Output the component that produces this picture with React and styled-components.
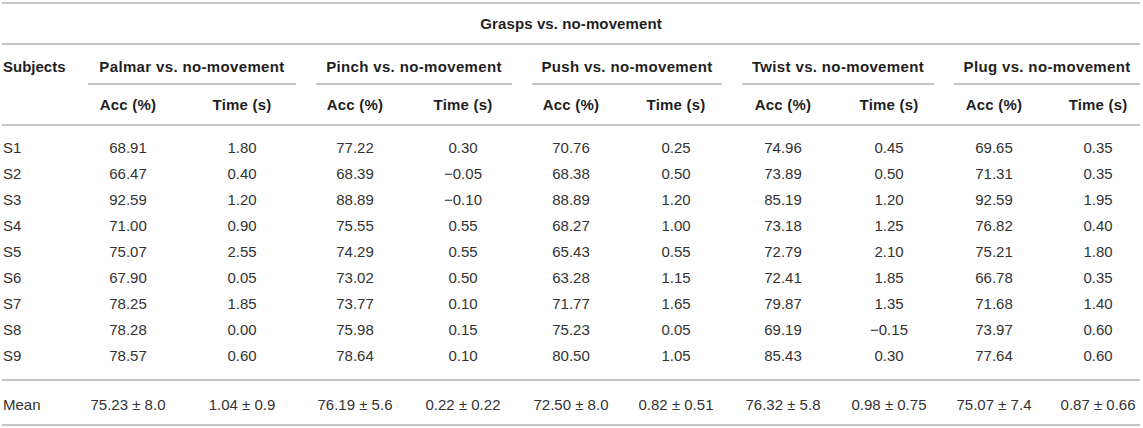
import React from 'react';
import styled, { createGlobalStyle } from 'styled-components';

const GlobalStyle = createGlobalStyle`
  body {
    margin: 0;
    background: #ffffff;
    font-family: 'Liberation Sans', Arial, sans-serif;
  }
`;

const LINE = '2px solid #c4c4c4';

// column widths tuned so the centred values line up with the source table
const cols = [
  { w: 76 },
  { w: 100 },
  { w: 128 },
  { w: 98 },
  { w: 118 },
  { w: 98 },
  { w: 112 },
  { w: 102 },
  { w: 110 },
  { w: 112, pr: 12 },
  { w: 84 },
];

const groups = ['Palmar', 'Pinch', 'Push', 'Twist', 'Plug'];

const rows = [
  ['S1', '68.91', '1.80', '77.22', '0.30', '70.76', '0.25', '74.96', '0.45', '69.65', '0.35'],
  ['S2', '66.47', '0.40', '68.39', '\u22120.05', '68.38', '0.50', '73.89', '0.50', '71.31', '0.35'],
  ['S3', '92.59', '1.20', '88.89', '\u22120.10', '88.89', '1.20', '85.19', '1.20', '92.59', '1.95'],
  ['S4', '71.00', '0.90', '75.55', '0.55', '68.27', '1.00', '73.18', '1.25', '76.82', '0.40'],
  ['S5', '75.07', '2.55', '74.29', '0.55', '65.43', '0.55', '72.79', '2.10', '75.21', '1.80'],
  ['S6', '67.90', '0.05', '73.02', '0.50', '63.28', '1.15', '72.41', '1.85', '66.78', '0.35'],
  ['S7', '78.25', '1.85', '73.77', '0.10', '71.77', '1.65', '79.87', '1.35', '71.68', '1.40'],
  ['S8', '78.28', '0.00', '75.98', '0.15', '75.23', '0.05', '69.19', '\u22120.15', '73.97', '0.60'],
  ['S9', '78.57', '0.60', '78.64', '0.10', '80.50', '1.05', '85.43', '0.30', '77.64', '0.60'],
];

const mean = [
  'Mean', '75.23 ± 8.0', '1.04 ± 0.9', '76.19 ± 5.6', '0.22 ± 0.22', '72.50 ± 8.0',
  '0.82 ± 0.51', '76.32 ± 5.8', '0.98 ± 0.75', '75.07 ± 7.4', '0.87 ± 0.66',
];

const Wrapper = styled.div`
  padding: 2px 3px 0 2px;
`;

const Table = styled.table`
  width: 1138px;
  table-layout: fixed;
  border-collapse: collapse;
  border-top: ${LINE};
  font-size: 15px;
  color: #333333;
`;

const TitleCell = styled.th`
  padding: 10px 0 9px;
  line-height: 20px;
  font-weight: 700;
  color: #1f1f1f;
  text-align: center;
  letter-spacing: 0.1px;
  border-bottom: ${LINE};
`;

const SubjectHead = styled.th`
  vertical-align: top;
  text-align: left;
  padding: 12px 0 0 1px;
  line-height: 20px;
  font-weight: 700;
  color: #1f1f1f;
  border-bottom: ${LINE};
`;

const GroupCell = styled.th`
  padding: 0 ${(p) => (p.$last ? 0 : 10)}px 0 10px;
  font-weight: 700;
  color: #1f1f1f;
`;

const GroupLabel = styled.div`
  padding: 12px 0 6px;
  line-height: 20px;
  text-align: center;
  letter-spacing: 0.35px;
  border-bottom: ${LINE};
`;

const SubHead = styled.th`
  padding: 10px ${(p) => p.$pr || 0}px 9px 0;
  line-height: 20px;
  font-weight: 700;
  color: #1f1f1f;
  text-align: center;
  letter-spacing: 0.2px;
  border-bottom: ${LINE};
`;

const Cell = styled.td`
  padding: ${(p) => (p.$first ? 9 : 0)}px ${(p) => p.$pr || 0}px ${(p) => (p.$last ? 10 : 0)}px
    ${(p) => (p.$label ? 1 : 0)}px;
  line-height: 26px;
  text-align: ${(p) => (p.$label ? 'left' : 'center')};
  white-space: nowrap;
  border-bottom: ${(p) => (p.$last ? LINE : 'none')};
`;

const MeanCell = styled.td`
  padding: 14px ${(p) => p.$pr || 0}px 9px ${(p) => (p.$label ? 1 : 0)}px;
  line-height: 20px;
  text-align: ${(p) => (p.$label ? 'left' : 'center')};
  white-space: nowrap;
  border-bottom: ${LINE};
`;

export default function App() {
  return (
    <Wrapper>
      <GlobalStyle />
      <Table>
        <colgroup>
          {cols.map((c, i) => (
            <col key={i} style={{ width: c.w }} />
          ))}
        </colgroup>
        <thead>
          <tr>
            <TitleCell colSpan={11}>Grasps vs. no-movement</TitleCell>
          </tr>
          <tr>
            <SubjectHead rowSpan={2}>Subjects</SubjectHead>
            {groups.map((g, i) => (
              <GroupCell key={g} colSpan={2} $last={i === groups.length - 1}>
                <GroupLabel>{g} vs. no-movement</GroupLabel>
              </GroupCell>
            ))}
          </tr>
          <tr>
            {groups.flatMap((g, i) => [
              <SubHead key={g + 'a'} $pr={cols[i * 2 + 1].pr}>Acc (%)</SubHead>,
              <SubHead key={g + 't'} $pr={cols[i * 2 + 2].pr}>Time (s)</SubHead>,
            ])}
          </tr>
        </thead>
        <tbody>
          {rows.map((r, ri) => (
            <tr key={r[0]}>
              {r.map((v, ci) => (
                <Cell
                  key={ci}
                  $label={ci === 0}
                  $first={ri === 0}
                  $last={ri === rows.length - 1}
                  $pr={cols[ci].pr}
                >
                  {v}
                </Cell>
              ))}
            </tr>
          ))}
          <tr>
            {mean.map((v, ci) => (
              <MeanCell key={ci} $label={ci === 0} $pr={cols[ci].pr}>
                {v}
              </MeanCell>
            ))}
          </tr>
        </tbody>
      </Table>
    </Wrapper>
  );
}
